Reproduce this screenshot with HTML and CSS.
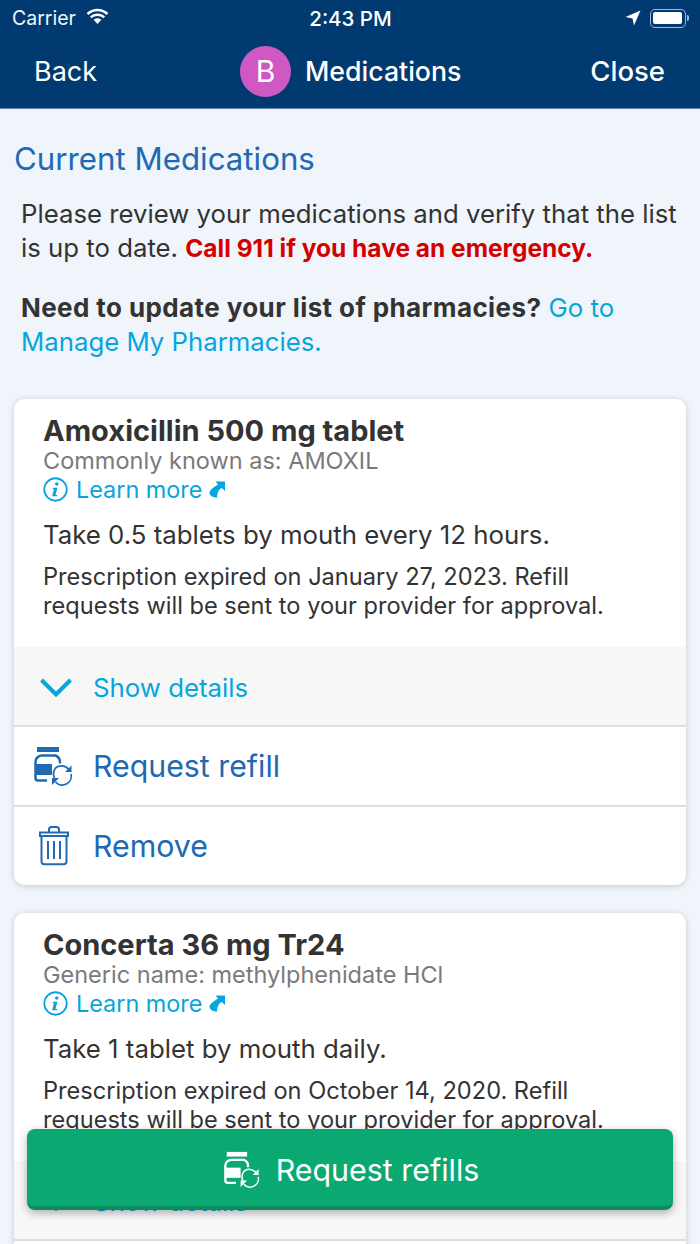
FILE: index.html
```html
<!DOCTYPE html>
<html lang="en">
<head>
  <meta charset="UTF-8">
  <title>Medications</title>
  <link rel="stylesheet" href="styles.css">
</head>
<body>
  <svg class="defs" width="0" height="0">
    <symbol id="bottle" viewBox="0 0 41 40">
      <rect x="4" y="1" width="22" height="5"/>
      <path d="M8 9.500h14.500c2.500 1 4.500 3 4.500 6.500v1.500M14 34.500H5c-1.500 0-2.500-1-2.500-2.500V16c0-3.500 2-5.500 5.500-6.500" fill="none" stroke="currentColor" stroke-width="2.500"/>
      <rect x="2" y="18" width="17" height="11"/>
      <path d="M21.500 32a10 10 0 0 1 1-10M22.500 22a9 9 0 0 1 13.500 2M38 28a9 9 0 0 1-15.500 8" fill="none" stroke="currentColor" stroke-width="1.700"/>
      <path d="M38.500 19.500v6.500h-6.500zM19 39v-7h7z"/>
    </symbol>
    <symbol id="info" viewBox="0 0 24 24">
      <circle cx="12" cy="12" r="10.800" fill="none" stroke="currentColor" stroke-width="1.700"/>
      <circle cx="13.200" cy="6.800" r="1.700"/>
      <path d="M9.500 10.200h4.300l-1.800 7h1.700v1.300H8.800l1.700-7H9.200z"/>
    </symbol>
    <symbol id="jump" viewBox="0 0 16 17">
      <path d="M6.500 .5H16V10l-3.200-3C10 8 8.500 11 8 16.500 4 16.500 1 15 .5 12 .5 9 5 6 9 3.500z"/>
    </symbol>
    <symbol id="chevron" viewBox="0 0 34 22">
      <path d="M2.500 3l14.500 14.500L31.500 3" fill="none" stroke="currentColor" stroke-width="4"/>
    </symbol>
    <symbol id="trash" viewBox="0 0 32 40">
      <g fill="none" stroke="currentColor" stroke-width="2">
        <path d="M2 6.500h28v3.500H2zM11 6V3.500C11 2 12 1 13.500 1h5C20 1 21 2 21 3.500V6"/>
        <path d="M3.500 10v25.500c0 1.800 1 2.700 2.700 2.700h19.600c1.700 0 2.700-.9 2.700-2.700V10"/>
        <path d="M10 15v18M16 15v18M22 15v18"/>
      </g>
    </symbol>
  </svg>

  <div class="phone">
    <header class="top">
      <div class="status">
        <div class="status-left">
          <span>Carrier</span>
          <svg class="wifi" viewBox="0 0 26 18">
            <path d="M13 3.500c3.800 0 7.200 1.500 9.700 3.900l1.800-2C21.500 2.500 17.500 .8 13 .8S4.500 2.500 1.500 5.400l1.800 2C5.800 5 9.200 3.500 13 3.500z"/>
            <path d="M13 8.500c2.400 0 4.500 .9 6.200 2.400l1.800-2C18.800 7 16 5.800 13 5.800S7.200 7 5 8.900l1.800 2C8.500 9.400 10.600 8.500 13 8.500z"/>
            <path d="M13 10.800c-1.500 0-3 .6-4.200 1.600L13 17l4.200-4.600c-1.200-1-2.700-1.600-4.200-1.600z"/>
          </svg>
        </div>
        <div class="status-time">2:43 PM</div>
        <div class="status-right">
          <svg class="arrow" viewBox="0 0 16 16"><path d="M15.500 .5L9 15.500 7.500 8.500 .5 7z"/></svg>
          <div class="battery"><div class="battery-fill"></div></div>
          <div class="battery-tip"></div>
        </div>
      </div>
      <nav class="nav">
        <a class="nav-back">Back</a>
        <div class="nav-title">
          <span class="avatar">B</span>
          <span>Medications</span>
        </div>
        <a class="nav-close">Close</a>
      </nav>
    </header>

    <main class="content">
      <h1>Current Medications</h1>
      <p class="intro">Please review your medications and verify that the list is up to date. <strong class="alert">Call 911 if you have an emergency.</strong></p>
      <p class="intro"><strong>Need to update your list of pharmacies?</strong> <a class="link">Go to Manage My Pharmacies.</a></p>

      <section class="card">
        <div class="card-body">
          <h2>Amoxicillin 500 mg tablet</h2>
          <div class="known">Commonly known as: AMOXIL</div>
          <div class="learn">
            <svg class="icon-info"><use href="#info"/></svg>
            <span>Learn more</span>
            <svg class="icon-jump"><use href="#jump"/></svg>
          </div>
          <div class="dose">Take 0.5 tablets by mouth every 12 hours.</div>
          <div class="note">Prescription expired on January 27, 2023. Refill requests will be sent to your provider for approval.</div>
        </div>
        <div class="row row-details">
          <svg class="icon-chevron"><use href="#chevron"/></svg>
          <span>Show details</span>
        </div>
        <div class="row row-action">
          <svg class="icon-bottle"><use href="#bottle"/></svg>
          <span>Request refill</span>
        </div>
        <div class="row row-action">
          <svg class="icon-trash"><use href="#trash"/></svg>
          <span>Remove</span>
        </div>
      </section>

      <section class="card">
        <div class="card-body">
          <h2>Concerta 36 mg Tr24</h2>
          <div class="known">Generic name: methylphenidate HCl</div>
          <div class="learn">
            <svg class="icon-info"><use href="#info"/></svg>
            <span>Learn more</span>
            <svg class="icon-jump"><use href="#jump"/></svg>
          </div>
          <div class="dose">Take 1 tablet by mouth daily.</div>
          <div class="note">Prescription expired on October 14, 2020. Refill requests will be sent to your provider for approval.</div>
        </div>
        <div class="row row-details">
          <svg class="icon-chevron"><use href="#chevron"/></svg>
          <span>Show details</span>
        </div>
        <div class="row row-action"></div>
      </section>
    </main>

    <button class="refills">
      <svg class="icon-bottle"><use href="#bottle"/></svg>
      <span>Request refills</span>
    </button>
  </div>
</body>
</html>
```

FILE: styles.css
```css
:root {
  --navy: #003a70;
  --page: #eff5fa;
  --blue: #2069b3;
  --sky: #06a5dd;
  --text: #333;
  --line: #dedede;
  --green: #0aa971;
}

* {
  box-sizing: border-box;
  margin: 0;
  padding: 0;
}

body {
  font-family: Inter, "Noto Sans", sans-serif;
  color: var(--text);
  background-color: var(--page);
}

.defs {
  position: absolute;
}

.phone {
  position: relative;
  width: 700px;
  height: 1244px;
  overflow: hidden;
}

.top {
  height: 109px;
  background-color: var(--navy);
  border-bottom: 1px solid #5f83a8;
  color: #fff;
}

.status {
  display: flex;
  justify-content: space-between;
  align-items: center;
  height: 36px;
  padding: 0 11px 0 12px;
  font-size: 19.500px;
}

.status-left,
.status-right {
  display: flex;
  align-items: center;
  width: 180px;
}

.status-left {
  gap: 9px;
  color: #f2f5f8;
}

.status-right {
  justify-content: flex-end;
}

.status-time {
  font-weight: 500;
  font-size: 20.500px;
}

.wifi {
  width: 25px;
  height: 17px;
  margin-top: -3px;
  fill: #fff;
}

.arrow {
  width: 16px;
  height: 16px;
  margin-right: 9px;
  fill: #fff;
}

.battery {
  width: 36px;
  height: 19px;
  padding: 2.500px;
  border: 1px solid #a3b6ca;
  border-radius: 5px;
}

.battery-fill {
  height: 100%;
  background-color: #fff;
  border-radius: 2px;
}

.battery-tip {
  width: 2px;
  height: 6px;
  margin-left: 1px;
  background-color: #a3b6ca;
  border-radius: 0 2px 2px 0;
}

.nav {
  display: flex;
  justify-content: space-between;
  align-items: center;
  height: 70px;
  padding: 0 35px;
  font-size: 27px;
}

.nav-back {
  font-weight: 400;
  margin-left: -1px;
}

.nav-close {
  font-size: 27.500px;
  font-weight: 500;
}

.nav-title {
  display: flex;
  align-items: center;
  gap: 14px;
  margin-left: 14px;
  font-size: 26.700px;
  font-weight: 500;
}

.avatar {
  display: flex;
  justify-content: center;
  align-items: center;
  width: 51px;
  height: 51px;
  background-color: #cf58c3;
  border-radius: 50%;
  font-size: 30px;
  font-weight: 400;
}

.content {
  padding: 29px 14px 0;
}

h1 {
  font-size: 31.250px;
  font-weight: 400;
  line-height: 42px;
  color: var(--blue);
}

.intro {
  padding: 0 7px;
  margin-top: 17px;
  font-size: 25.750px;
  line-height: 34px;
}

.intro + .intro {
  margin-top: 26px;
}

.intro strong {
  font-size: 26px;
  font-weight: 700;
  letter-spacing: 0.4px;
}

.intro .alert {
  font-size: 24.500px;
  letter-spacing: 0;
  color: #d40000;
}

.link {
  color: var(--sky);
}

.card {
  margin-top: 40px;
  background-color: #fff;
  border-radius: 10px;
  box-shadow: 0 1px 6px rgba(0, 0, 0, 0.18);
  overflow: hidden;
}

.card + .card {
  margin-top: 28px;
}

.card-body {
  padding: 14px 29px 27px;
}

h2 {
  font-size: 29px;
  font-weight: 700;
  line-height: 35px;
}

.known {
  font-size: 23.500px;
  line-height: 26px;
  color: #7a7a7a;
}

.learn {
  display: flex;
  align-items: center;
  height: 31px;
  font-size: 23.400px;
  color: var(--sky);
}

.icon-info {
  width: 25px;
  height: 25px;
  margin-right: 8px;
  fill: currentColor;
}

.icon-jump {
  width: 16px;
  height: 17px;
  margin-left: 7px;
  fill: currentColor;
}

.dose {
  margin-top: 13px;
  font-size: 25.800px;
  line-height: 34px;
}

.note {
  margin-top: 10px;
  font-size: 23.600px;
  line-height: 29px;
}

.row {
  display: flex;
  align-items: center;
  border-top: 2px solid var(--line);
}

.row-details {
  height: 78px;
  padding: 3px 0 0 25px;
  background-color: #f7f7f7;
  border-top: none;
  font-size: 25.800px;
  color: var(--sky);
}

.row-action {
  height: 80px;
  font-size: 30.300px;
  color: var(--blue);
}

.icon-chevron {
  width: 34px;
  height: 22px;
  margin-right: 20px;
  color: var(--sky);
}

.row-action .icon-bottle {
  width: 41px;
  height: 40px;
  margin: 0 19px;
  fill: currentColor;
}

.icon-trash {
  width: 32px;
  height: 40px;
  margin: 0 23px 0 24px;
}

.refills {
  position: absolute;
  left: 27px;
  top: 1129px;
  display: flex;
  justify-content: center;
  align-items: center;
  gap: 15px;
  width: 646px;
  height: 81px;
  padding: 4px 0 0 2px;
  background-color: var(--green);
  border: none;
  border-bottom: 4px solid #0a8c60;
  border-radius: 8px;
  box-shadow: 0 3px 8px rgba(0, 0, 0, 0.3);
  font-family: inherit;
  font-size: 30.400px;
  color: #fff;
}

.refills .icon-bottle {
  width: 38px;
  height: 37px;
  fill: currentColor;
}
```
